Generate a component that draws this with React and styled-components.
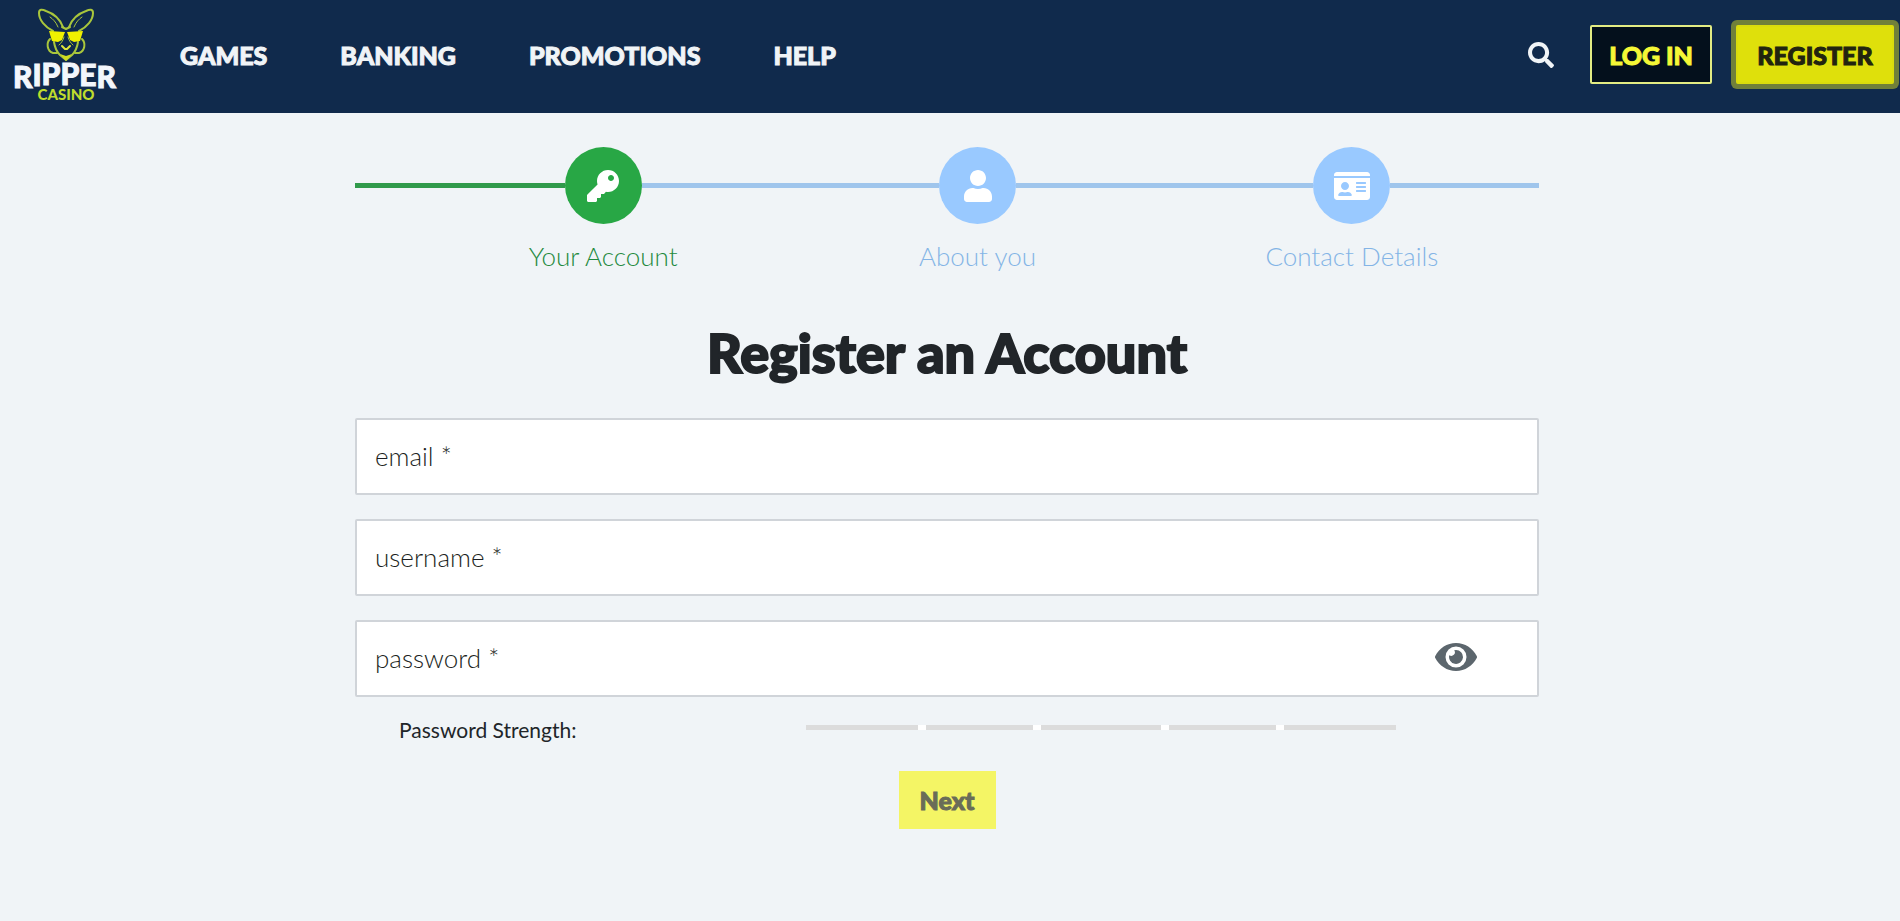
import React, { useState } from "react";
import styled, { createGlobalStyle } from "styled-components";
import { FaSearch, FaKey, FaUser, FaIdCard, FaEye } from "react-icons/fa";

const GlobalStyle = createGlobalStyle`
  * {
    box-sizing: border-box;
  }
  body {
    margin: 0;
    background: #f0f4f7;
    color: #212529;
    font-family: Lato, "Liberation Sans", sans-serif;
    font-weight: 300;
  }
`;

const Header = styled.header`
  display: flex;
  align-items: center;
  height: 113px;
  padding: 0 6px 4px 12px;
  background: #102a4c;
`;

const LogoLink = styled.a`
  display: block;
  width: 108px;
  height: 96px;
`;

const Nav = styled.nav`
  display: flex;
  flex: 1;
  gap: 73px;
  margin-left: 60px;
`;

const NavLink = styled.a`
  color: #f0f4f7;
  font-size: 25px;
  font-weight: 900;
  line-height: 32px;
  text-decoration: none;
  -webkit-text-stroke: 1px;
`;

const Actions = styled.div`
  display: flex;
  align-items: center;
  gap: 24px;
`;

const SearchButton = styled.button`
  display: flex;
  margin-right: 12px;
  padding: 0;
  border: 0;
  background: none;
  color: #f0f4f7;
  font-size: 26px;
`;

const HeaderButton = styled.button`
  width: ${(props) => (props.$primary ? "158px" : "122px")};
  height: 59px;
  padding: 0;
  border: 2px solid ${(props) => (props.$primary ? "#dbdc0c" : "#e3ec83")};
  border-radius: 2px;
  background: ${(props) => (props.$primary ? "#dfe00b" : "#04101c")};
  box-shadow: ${(props) => (props.$primary ? "0 0 0 5px #71803a" : "none")};
  color: ${(props) => (props.$primary ? "#22240f" : "#f5f836")};
  font-family: inherit;
  font-size: 25px;
  font-weight: 900;
  -webkit-text-stroke: 1px;
`;

const Main = styled.main`
  max-width: 1190px;
  margin: 0 auto;
  padding: 34px 6px 0 0;
`;

const Steps = styled.ol`
  display: flex;
  margin: 0;
  padding: 0;
  list-style: none;

  &::before {
    content: "";
    width: 61px;
    height: 5px;
    margin-top: 36px;
    background: #309a4b;
  }
`;

const Step = styled.li`
  flex: 1;
  color: ${(props) => (props.$active ? "#1f8a3e" : "#84b4e6")};
  font-size: 26px;
  line-height: 32px;
  text-align: center;
`;

const Rail = styled.div`
  display: flex;
  align-items: center;
  margin-bottom: 16px;
`;

const Line = styled.span`
  flex: 1;
  height: 5px;
  background: ${(props) => (props.$done ? "#309a4b" : "#9fc5ec")};
`;

const Circle = styled.span`
  display: flex;
  align-items: center;
  justify-content: center;
  width: 77px;
  height: 77px;
  border-radius: 50%;
  background: ${(props) => (props.$active ? "#28a745" : "#99c9ff")};
  color: #fff;
`;

const Title = styled.h1`
  margin: 50px 0 34px;
  font-size: 54px;
  font-weight: 900;
  line-height: 62px;
  text-align: center;
  -webkit-text-stroke: 2px;
`;

const Form = styled.form`
  display: flex;
  flex-direction: column;
  gap: 24px;
`;

const Field = styled.div`
  display: grid;
  grid-template-columns: 1fr auto;
  align-items: center;
  height: 77px;
  padding-right: 60px;
  border: 2px solid #d0d4d9;
  border-radius: 2px;
  background: #fff;
`;

const Input = styled.input`
  grid-area: 1 / 1;
  width: 100%;
  height: 100%;
  padding: 0 18px;
  border: 0;
  outline: 0;
  background: transparent;
  color: #495057;
  font-family: inherit;
  font-size: 26px;

  &:not(:placeholder-shown) + label {
    visibility: hidden;
  }
`;

const Label = styled.label`
  grid-area: 1 / 1;
  padding: 0 18px 2px;
  color: #1c1f22;
  font-size: 26px;
  line-height: 32px;
  pointer-events: none;
`;

const EyeButton = styled.button`
  display: flex;
  padding: 0 0 4px;
  border: 0;
  background: none;
  color: #5c666d;
`;

const Strength = styled.div`
  display: grid;
  grid-template-columns: 407fr 590fr;
  align-items: center;
  margin-top: -5px;
  padding: 0 143px 3px 44px;
  font-size: 21px;
  font-weight: 400;
  line-height: 28px;
`;

const Meter = styled.div`
  display: flex;
  gap: 8px;
  height: 5px;
  margin-bottom: 5px;
  background: #fff;
`;

const MeterPart = styled.span`
  flex: ${(props) => props.$share};
  background: #dcdcdc;
`;

const NextButton = styled.button`
  align-self: center;
  width: 97px;
  height: 58px;
  padding: 0;
  border: 0;
  background: #f4f565;
  color: #6a6c58;
  font-family: inherit;
  font-size: 25px;
  font-weight: 900;
  -webkit-text-stroke: 1px;
`;

const steps = [
  { label: "Your Account", icon: <FaKey size={32} />, active: true },
  { label: "About you", icon: <FaUser size={32} /> },
  { label: "Contact Details", icon: <FaIdCard size={36} /> },
];

const meterShares = [112, 107, 120, 107, 112];

function Logo() {
  return (
    <svg width="108" height="96" viewBox="12 6 108 96" fill="none">
      <g stroke="#a9c63c" strokeWidth="2" strokeLinejoin="round" strokeLinecap="round">
        <path d="M53 30C45 26 39 19 39 12C39 8 42 8 46 10C55 13 60 18 63 26" />
        <path d="M79 30C87 26 93 19 93 12C93 8 90 8 86 10C77 13 72 18 69 26" />
        <path d="M58 26C56 21 53 18 50 16M74 26C76 21 79 18 82 16" strokeWidth="1" />
        <path d="M62 26L66 28L70 26" />
        <path d="M50 38C46 42 47 50 53 52L57 52M82 38C86 42 85 50 79 52L75 52" />
        <path d="M54 41C55 48 57 51 60 54L66 59L72 54C75 51 77 48 78 41" />
        <path d="M64 36C63 40 61 42 59 44M68 36C69 40 71 42 73 44" strokeWidth="1" />
        <path d="M62 45L65 48H67L70 45" stroke="#dfe63a" />
      </g>
      <path d="M49 30L65 31L62 39L58 41L52 40Z" fill="#f0f000" />
      <path d="M83 30L67 31L70 39L74 41L80 40Z" fill="#f0f000" />
      <path d="M60 53L66 55L72 53L66 60Z" fill="#cfdc20" />
      <text
        x="13"
        y="87"
        dy="0 -2 -1 0 1 2"
        fill="#f3f6fc"
        stroke="#f3f6fc"
        fontFamily="Lato, sans-serif"
        fontWeight="900"
        fontSize="30"
      >
        RIPPER
      </text>
      <text
        x="66"
        y="99"
        fill="#bfdc2d"
        fontFamily="Lato, sans-serif"
        fontWeight="900"
        fontSize="15"
        textAnchor="middle"
      >
        CASINO
      </text>
    </svg>
  );
}

function App() {
  let [showPassword, setShowPassword] = useState(false);

  return (
    <>
      <GlobalStyle />
      <Header>
        <LogoLink href="#" aria-label="Ripper Casino">
          <Logo />
        </LogoLink>
        <Nav>
          <NavLink href="#games">GAMES</NavLink>
          <NavLink href="#banking">BANKING</NavLink>
          <NavLink href="#promotions">PROMOTIONS</NavLink>
          <NavLink href="#help">HELP</NavLink>
        </Nav>
        <Actions>
          <SearchButton type="button" aria-label="Search">
            <FaSearch />
          </SearchButton>
          <HeaderButton type="button">LOG IN</HeaderButton>
          <HeaderButton type="button" $primary>
            REGISTER
          </HeaderButton>
        </Actions>
      </Header>
      <Main>
        <Steps>
          {steps.map((step) => (
            <Step key={step.label} $active={step.active}>
              <Rail>
                <Line $done={step.active} />
                <Circle $active={step.active}>{step.icon}</Circle>
                <Line />
              </Rail>
              {step.label}
            </Step>
          ))}
        </Steps>
        <Title>Register an Account</Title>
        <Form onSubmit={(e) => e.preventDefault()}>
          <Field>
            <Input id="email" type="email" placeholder=" " />
            <Label htmlFor="email">email *</Label>
          </Field>
          <Field>
            <Input id="username" type="text" placeholder=" " />
            <Label htmlFor="username">username *</Label>
          </Field>
          <Field>
            <Input
              id="password"
              type={showPassword ? "text" : "password"}
              placeholder=" "
            />
            <Label htmlFor="password">password *</Label>
            <EyeButton
              type="button"
              aria-label="Show password"
              onClick={() => {
                setShowPassword(!showPassword);
              }}
            >
              <FaEye size={42} />
            </EyeButton>
          </Field>
          <Strength>
            <span>Password Strength:</span>
            <Meter>
              {meterShares.map((share, i) => (
                <MeterPart key={i} $share={share} />
              ))}
            </Meter>
          </Strength>
          <NextButton type="submit">Next</NextButton>
        </Form>
      </Main>
    </>
  );
}

export default App;
